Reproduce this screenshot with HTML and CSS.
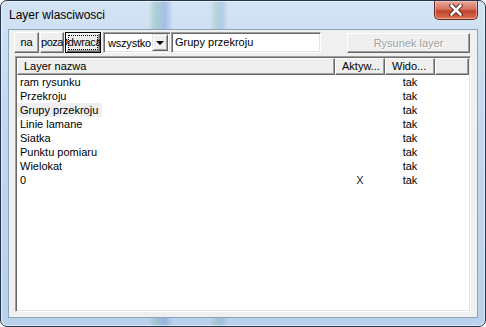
FILE: index.html
```html
<!DOCTYPE html>
<html lang="pl">
<head>
  <meta charset="UTF-8" />
  <title>Layer wlasciwosci</title>
  <link rel="stylesheet" href="styles.css">
</head>
<body>
  <div class="window">
    <!-- title bar -->
    <div class="titlebar">
      <span class="title">Layer wlasciwosci</span>
      <div class="close">
        <svg width="14" height="12" viewBox="0 0 14 12">
          <path d="M2.5 1.5 L11.5 10.5 M11.5 1.5 L2.5 10.5" stroke="#4a1a14" stroke-width="4.4" stroke-linecap="round"/>
          <path d="M2.5 1.5 L11.5 10.5 M11.5 1.5 L2.5 10.5" stroke="#fff" stroke-width="2.6" stroke-linecap="round"/>
        </svg>
      </div>
    </div>

    <div class="client">
      <!-- toolbar -->
      <div class="toolbar">
        <div class="btn btn-na"><span>na</span></div>
        <div class="btn btn-poza"><span>poza</span></div>
        <div class="btn btn-odwr default"><span>Odwracać</span></div>
        <div class="combo">
          <span class="combo-text">wszystko</span>
          <span class="combo-arrow"></span>
        </div>
        <div class="field">Grupy przekroju</div>
        <div class="btn btn-layer disabled"><span>Rysunek layer</span></div>
      </div>

      <!-- list view -->
      <div class="list">
        <div class="list-head">
          <div class="head-cell">Layer nazwa</div>
          <div class="head-cell">Aktyw...</div>
          <div class="head-cell">Wido...</div>
          <div class="head-cell"></div>
        </div>
        <div class="list-body">
          <div class="row"><span class="name">ram rysunku</span><span class="c"></span><span class="c">tak</span></div>
          <div class="row"><span class="name">Przekroju</span><span class="c"></span><span class="c">tak</span></div>
          <div class="row"><span class="name sel">Grupy przekroju</span><span class="c"></span><span class="c">tak</span></div>
          <div class="row"><span class="name">Linie lamane</span><span class="c"></span><span class="c">tak</span></div>
          <div class="row"><span class="name">Siatka</span><span class="c"></span><span class="c">tak</span></div>
          <div class="row"><span class="name">Punktu pomiaru</span><span class="c"></span><span class="c">tak</span></div>
          <div class="row"><span class="name">Wielokat</span><span class="c"></span><span class="c">tak</span></div>
          <div class="row"><span class="name">0</span><span class="c x">X</span><span class="c">tak</span></div>
        </div>
      </div>
    </div>
  </div>
</body>
</html>
```

FILE: styles.css
```css
body {
  margin: 0;
  font-family: "Liberation Sans", Arial, sans-serif;
  background: #ffffff;
}

.window {
  width: 486px;
  height: 327px;
  box-sizing: border-box;
  border: 1px solid #24364b;
  border-radius: 7px;
  box-shadow: inset 0 0 0 1px rgba(255, 255, 255, 0.55);
  background:
    linear-gradient(to right, transparent 0, transparent 148px, rgba(110, 185, 150, 0.35) 153px, rgba(80, 125, 200, 0.35) 164px, transparent 172px, transparent 209px, rgba(110, 180, 150, 0.3) 215px, rgba(90, 140, 200, 0.25) 221px, transparent 227px),
    linear-gradient(#d2e3f4, #c1d7ee 40%, #b9d1ea);
  display: flex;
  flex-direction: column;
  overflow: hidden;
}

/* title bar */
.titlebar {
  height: 28px;
  display: flex;
  align-items: flex-start;
  justify-content: space-between;
}

.title {
  margin: 7px 0 0 8px;
  font-size: 12px;
  line-height: 15px;
  color: #000;
}

.close {
  width: 44px;
  height: 19px;
  margin-right: 7px;
  box-sizing: border-box;
  border: 1px solid #6a2a20;
  border-top: none;
  border-radius: 0 0 5px 5px;
  background: linear-gradient(#e9a898, #d47561 45%, #c0432c 55%, #d8704f);
  box-shadow: inset 0 0 0 1px rgba(255, 220, 210, 0.5);
  display: flex;
  align-items: center;
  justify-content: center;
}

/* client area */
.client {
  flex: 1;
  margin: 0 7px 8px 7px;
  border: 1px solid #8ba3bd;
  background: #f0f0f0;
  display: flex;
  flex-direction: column;
  font-size: 11px;
  color: #000;
}

.toolbar {
  display: flex;
  align-items: flex-start;
  padding: 2px 7px 0 5px;
  height: 21px;
}

.btn {
  height: 21px;
  box-sizing: border-box;
  background: #efefef;
  border-top: 1px solid #fff;
  border-left: 1px solid #fff;
  border-right: 1px solid #696969;
  border-bottom: 1px solid #696969;
  box-shadow: inset -1px -1px 0 #a0a0a0;
  display: flex;
  align-items: center;
  justify-content: center;
  overflow: hidden;
  line-height: 13px;
}

.btn span {
  white-space: nowrap;
  flex-shrink: 0;
}

.btn-na {
  width: 25px;
  margin-right: 1px;
}

.btn-poza {
  width: 24px;
  margin-right: 1px;
  letter-spacing: -0.5px;
}

.btn-odwr {
  width: 36px;
  letter-spacing: -0.3px;
}

.default {
  border: 1px solid #000;
  box-shadow: inset 1px 1px 0 #fff, inset -1px -1px 0 #696969, inset -2px -2px 0 #a0a0a0;
  outline: 1px dotted #000;
  outline-offset: -4px;
}

.combo {
  width: 68px;
  height: 21px;
  margin-left: 2px;
  box-sizing: border-box;
  background: #fff;
  border-top: 1px solid #a0a0a0;
  border-left: 1px solid #a0a0a0;
  border-right: 1px solid #fff;
  border-bottom: 1px solid #fff;
  box-shadow: inset 1px 1px 0 #696969, inset -1px -1px 0 #e3e3e3;
  display: flex;
  align-items: center;
  padding: 2px;
}

.combo-text {
  flex: 1;
  padding-left: 2px;
  letter-spacing: -0.2px;
}

.combo-arrow {
  width: 16px;
  height: 17px;
  box-sizing: border-box;
  background: #efefef;
  border-top: 1px solid #e3e3e3;
  border-left: 1px solid #e3e3e3;
  border-right: 1px solid #696969;
  border-bottom: 1px solid #696969;
  box-shadow: inset 1px 1px 0 #fff, inset -1px -1px 0 #a0a0a0;
  display: flex;
  align-items: center;
  justify-content: center;
}

.combo-arrow::after {
  content: "";
  border-left: 4px solid transparent;
  border-right: 4px solid transparent;
  border-top: 4px solid #000;
  margin-top: 1px;
}

.field {
  width: 150px;
  height: 21px;
  box-sizing: border-box;
  background: #fff;
  border-top: 1px solid #a0a0a0;
  border-left: 1px solid #a0a0a0;
  border-right: 1px solid #fff;
  border-bottom: 1px solid #fff;
  box-shadow: inset 1px 1px 0 #696969, inset -1px -1px 0 #e3e3e3;
  padding: 3px 0 0 3px;
  line-height: 13px;
}

.btn-layer {
  width: 123px;
  height: 20px;
  margin-left: auto;
  margin-top: 1px;
}

.disabled {
  color: #a0a0a0;
  text-shadow: 1px 1px 0 #fff;
}

/* list view */
.list {
  margin: 3px 6px 5px 6px;
  flex: 1;
  box-sizing: border-box;
  background: #fff;
  border-top: 1px solid #a0a0a0;
  border-left: 1px solid #a0a0a0;
  border-right: 1px solid #fff;
  border-bottom: 1px solid #fff;
  box-shadow: inset 1px 1px 0 #696969, inset -1px -1px 0 #e3e3e3;
  padding: 1px;
}

.list-head {
  display: grid;
  grid-template-columns: 318px 50px 50px 1fr;
  height: 17px;
}

.head-cell {
  box-sizing: border-box;
  background: #efefef;
  border-top: 1px solid #fff;
  border-left: 1px solid #fff;
  border-right: 1px solid #696969;
  border-bottom: 1px solid #696969;
  box-shadow: inset -1px -1px 0 #a0a0a0;
  padding: 1px 0 0 6px;
  line-height: 13px;
  white-space: nowrap;
  overflow: hidden;
}

.row {
  display: grid;
  grid-template-columns: 318px 50px 50px;
  height: 14px;
  line-height: 14px;
}

.name {
  justify-self: start;
  padding: 0 4px 0 3px;
}

.sel {
  background: #efefef;
}

.c {
  text-align: center;
}

.x {
  color: #222;
}
```
